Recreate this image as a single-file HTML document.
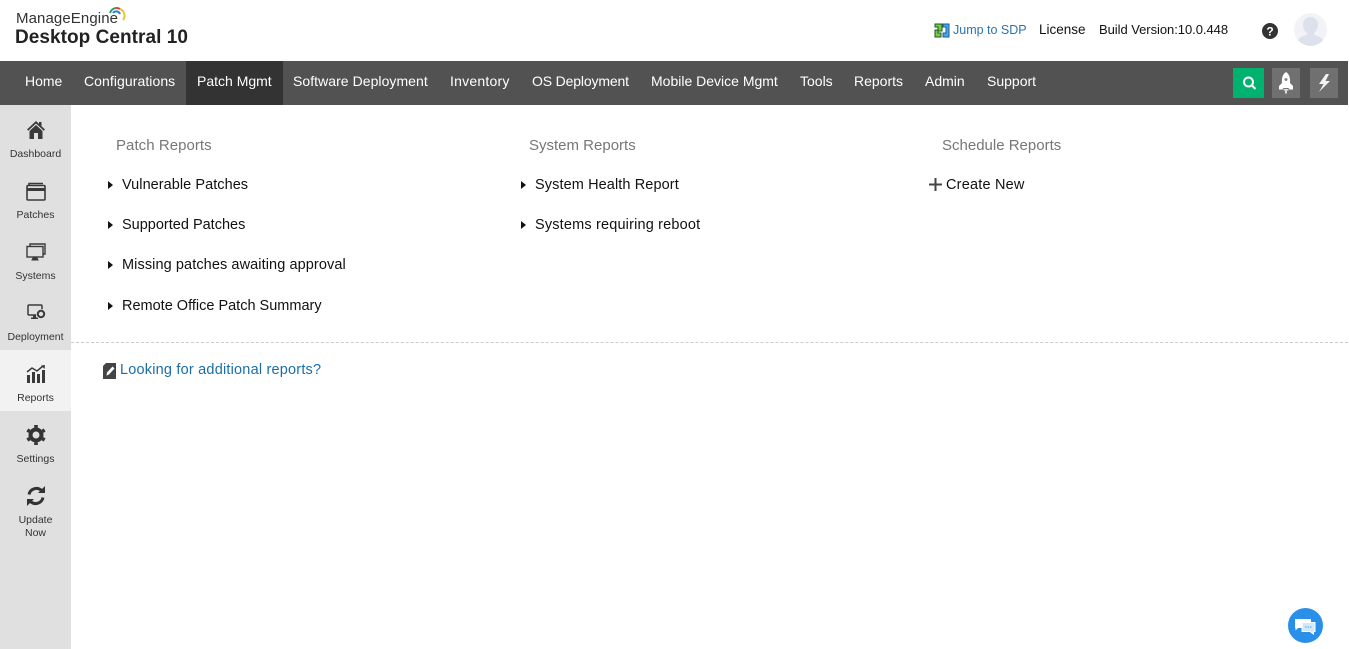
<!DOCTYPE html>
<html><head><meta charset="utf-8"><title>Desktop Central</title>
<style>
html,body{margin:0;padding:0;background:#fff;width:1349px;height:649px;overflow:hidden}
body{position:relative;font-family:"Liberation Sans",sans-serif;color:#111}
.t{position:absolute;white-space:nowrap;line-height:18px}
.n{color:#fff;font-size:14px;top:72px}
.s{color:#333;font-size:10.5px;text-align:center;width:71px;left:0;line-height:13px;position:absolute}
.h{color:#777;font-size:15px;top:136px}
.l{color:#111;font-size:14.5px}
.a{position:absolute;width:0;height:0;border-left:5px solid #111;border-top:4px solid transparent;border-bottom:4px solid transparent}
svg{position:absolute;overflow:visible}
</style></head><body>
<div class="t" style="left:16px;top:10px;font-size:15px;color:#333;letter-spacing:.1px">ManageEngine</div>
<svg style="left:108px;top:6px" width="18" height="18" viewBox="0 0 18 18" fill="none" stroke-width="2"><path d="M2 7A7 7 0 0 1 8 2" stroke="#2a9d5c"/><path d="M8 2A7 7 0 0 1 12 3" stroke="#d9404f"/><path d="M12 3A7 7 0 0 1 15 14" stroke="#e9c531"/><path d="M5 7A4 4 0 0 1 12 8" stroke="#2f7fd0"/></svg>
<div class="t" style="left:15px;top:28px;font-size:19px;color:#222;font-weight:bold;line-height:20px;letter-spacing:.05px">Desktop Central&nbsp;10</div>
<svg style="left:934px;top:23px" width="16" height="15" viewBox="0 0 16 15"><path d="M1 1H8V8H4V10H7V14H1V7H4V4H1Z" fill="#7ccb3c" stroke="#1d5b22"/><path d="M9 1H15V14H9V10H12V4H9Z" fill="#45a7ea" stroke="#1c5e95"/></svg>
<div class="t" style="left:953px;top:21px;font-size:12.500px;color:#2a75b0">Jump to SDP</div>
<div class="t" style="left:1039px;top:21px;font-size:13.500px;color:#111">License</div>
<div class="t" style="left:1099px;top:21px;font-size:13px;color:#111;letter-spacing:-.05px">Build Version:10.0.448</div>
<svg style="left:1262px;top:23px" width="16" height="16"><circle cx="8" cy="8" r="8" fill="#333"/><text x="8" y="12.500" font-size="12" font-weight="bold" text-anchor="middle" fill="#fff" font-family="Liberation Sans">?</text></svg>
<svg style="left:1294px;top:13px" width="33" height="33" viewBox="0 0 33 33"><circle cx="16.500" cy="16.500" r="16.500" fill="#f2f3f7"/><path d="M4 27C7 23 11 23 13 21V20C10 18 9 14 9 11C9 7 13 4 16.500 4S24 7 24 11C24 14 23 18 20 20V21C22 23 26 23 29 27A16 16 0 0 1 4 27Z" fill="#dde1ec"/></svg>

<div style="position:absolute;left:0;top:61px;width:1348px;height:44px;background:#525252"></div>
<div style="position:absolute;left:186px;top:61px;width:97px;height:44px;background:#333"></div>
<div class="t n" style="left:25px">Home</div>
<div class="t n" style="left:84px;letter-spacing:.07px">Configurations</div>
<div class="t n" style="left:197px">Patch Mgmt</div>
<div class="t n" style="left:293px;letter-spacing:.05px">Software Deployment</div>
<div class="t n" style="left:450px;letter-spacing:.22px">Inventory</div>
<div class="t n" style="left:532px;letter-spacing:-.15px">OS Deployment</div>
<div class="t n" style="left:651px">Mobile Device Mgmt</div>
<div class="t n" style="left:800px">Tools</div>
<div class="t n" style="left:854px">Reports</div>
<div class="t n" style="left:925px">Admin</div>
<div class="t n" style="left:987px">Support</div>

<div style="position:absolute;left:1233px;top:68px;width:31px;height:30px;background:#00b26f"></div>
<svg style="left:1242px;top:76px" width="14" height="14" fill="none" stroke="#fff" stroke-width="2"><circle cx="6.500" cy="6" r="4.500"/><path d="M10 9.500L13.500 13"/></svg>
<div style="position:absolute;left:1272px;top:68px;width:28px;height:30px;background:#707070"></div>
<svg style="left:1279px;top:72px" width="14" height="22" viewBox="0 0 14 22"><path d="M7 0C10.500 2 11.500 7 11 11L14 14V17.500H10.500L9.500 16H4.500L3.500 17.500H0V14L3 11C2.500 7 3.500 2 7 0Z" fill="#fff"/><path d="M4.500 17H9.500V18.500H8V21.500H6V18.500H4.500Z" fill="#ddd"/><circle cx="7" cy="7.500" r="1.500" fill="#888"/></svg>
<div style="position:absolute;left:1310px;top:68px;width:28px;height:30px;background:#707070"></div>
<svg style="left:1317px;top:74px" width="14" height="18" viewBox="0 0 14 18"><path d="M9 0L2 10H6.500L2 18L13 7H8.500L12 0Z" fill="#f2f2f2"/></svg>

<div style="position:absolute;left:0;top:105px;width:71px;height:544px;background:#e0e0e0"></div>
<div style="position:absolute;left:0;top:350px;width:71px;height:61px;background:#f2f2f2"></div>

<svg style="left:26px;top:120px" width="20" height="20" viewBox="0 0 20 20"><path d="M10 1L1 9.500L2.200 10.700L10 3.500L17.800 10.700L19 9.500L15.500 6.200V2H13V3.900Z" fill="#3a3a3a"/><path d="M10 5L3.500 11V19H8V13H12V19H16.500V11Z" fill="#3a3a3a"/></svg>
<div class="s" style="top:148px">Dashboard</div>
<svg style="left:26px;top:182px" width="20" height="19" viewBox="0 0 20 19" fill="none" stroke="#3a3a3a" stroke-width="1.600"><path d="M3 3V1.500H17"/><rect x="1" y="3.500" width="18" height="14.500" rx="1" fill="#e0e0e0"/><path d="M1 7.500H19" stroke-width="3"/></svg>
<div class="s" style="top:209px">Patches</div>
<svg style="left:26px;top:243px" width="20" height="19" viewBox="0 0 20 19" fill="none" stroke="#3a3a3a" stroke-width="1.400"><path d="M4 3V1H19V11H17"/><rect x="1" y="3.500" width="16" height="10.500" fill="#e0e0e0"/><path d="M6 17H12L11 15H7Z" fill="#3a3a3a" stroke-width="1"/></svg>
<div class="s" style="top:270px">Systems</div>
<svg style="left:27px;top:304px" width="19" height="18" viewBox="0 0 19 18"><rect x="1" y="1" width="14" height="10" rx="1" fill="none" stroke="#3a3a3a" stroke-width="1.500"/><path d="M4 15H11V13.500H9V11H6V13.500H4Z" fill="#3a3a3a"/><circle cx="14" cy="10" r="5" fill="#e0e0e0"/><circle cx="14" cy="10" r="3.200" fill="none" stroke="#3a3a3a" stroke-width="2"/></svg>
<div class="s" style="top:331px">Deployment</div>
<svg style="left:26px;top:365px" width="20" height="19" viewBox="0 0 20 19" fill="#3a3a3a"><path d="M1 7L6 3L11 6L17 1" fill="none" stroke="#3a3a3a" stroke-width="1.500"/><path d="M19 0L15 .5L18.500 4Z"/><rect x="1" y="10" width="3" height="8"/><rect x="6" y="7" width="3" height="11"/><rect x="11" y="9" width="3" height="9"/><rect x="16" y="5" width="3" height="13"/></svg>
<div class="s" style="top:392px">Reports</div>
<svg style="left:26px;top:425px" width="20" height="20" viewBox="0 0 20 20"><circle cx="10" cy="10" r="5.500" fill="none" stroke="#333" stroke-width="4"/><path d="M10 10L10 0M10 10L10 20M10 10L1.300 5M10 10L18.700 5M10 10L1.300 15M10 10L18.700 15" stroke="#333" stroke-width="3.600" stroke-dasharray="2.600 4.800 10" stroke-dashoffset="-7.400"/></svg>
<div class="s" style="top:453px">Settings</div>
<svg style="left:26px;top:486px" width="20" height="20" viewBox="0 0 20 20" fill="none" stroke="#333" stroke-width="3"><path d="M3 8.500A7.500 7.500 0 0 1 15.500 4.500"/><path d="M17 11.500A7.500 7.500 0 0 1 4.500 15.500"/><path d="M12 7H19V0Z" fill="#333" stroke="none"/><path d="M8 13H1V20Z" fill="#333" stroke="none"/></svg>
<div class="s" style="top:514px">Update<br>Now</div>

<div class="t h" style="left:116px;top:137px;letter-spacing:.05px">Patch Reports</div>
<div class="t h" style="left:529px;top:137px">System Reports</div>
<div class="t h" style="left:942px;top:137px">Schedule Reports</div>

<div class="a" style="left:108px;top:181px"></div><div class="t l" style="left:122px;top:176px;letter-spacing:.05px">Vulnerable Patches</div>
<div class="a" style="left:108px;top:221px"></div><div class="t l" style="left:122px;top:216px">Supported Patches</div>
<div class="a" style="left:108px;top:261px"></div><div class="t l" style="left:122px;top:256px;letter-spacing:.09px">Missing patches awaiting approval</div>
<div class="a" style="left:108px;top:302px"></div><div class="t l" style="left:122px;top:297px">Remote Office Patch Summary</div>
<div class="a" style="left:521px;top:181px"></div><div class="t l" style="left:535px;top:176px;letter-spacing:.1px">System Health Report</div>
<div class="a" style="left:521px;top:221px"></div><div class="t l" style="left:535px;top:216px;letter-spacing:.17px">Systems requiring reboot</div>
<svg style="left:929px;top:178px" width="13" height="13"><path d="M6.500 0V13M0 6.500H13" stroke="#444" stroke-width="2"/></svg>
<div class="t l" style="left:946px;top:176px;letter-spacing:.2px">Create New</div>

<div style="position:absolute;left:71px;top:342px;width:1277px;border-top:1px dashed #ccc"></div>
<svg style="left:103px;top:363px" width="13" height="16" viewBox="0 0 13 16"><path d="M3 0H13V16H0V3Z" fill="#444"/><path d="M3.500 12.500L4 9.500L9.500 3.500L11.500 5.500L6 11.500Z" fill="#fff"/></svg>
<div class="t" style="left:120px;top:361px;font-size:14.500px;color:#1a6ea8;letter-spacing:.2px">Looking for additional reports?</div>

<svg style="left:1288px;top:608px" width="35" height="35" viewBox="0 0 35 35"><circle cx="17.500" cy="17.500" r="17.500" fill="#2a8fe8"/><path d="M7 11H23V14H14V20H10L7.500 22.500V20H7Z" fill="#fff"/><path d="M14 14.500H27V23.500H25.500V26L22 23.500H14Z" fill="#d4e8fb" stroke="#fff"/><path d="M17 19H18.500M19.500 19H21M22 19H23.500" stroke="#7db8ee" stroke-width="1.500"/></svg>
</body></html>
